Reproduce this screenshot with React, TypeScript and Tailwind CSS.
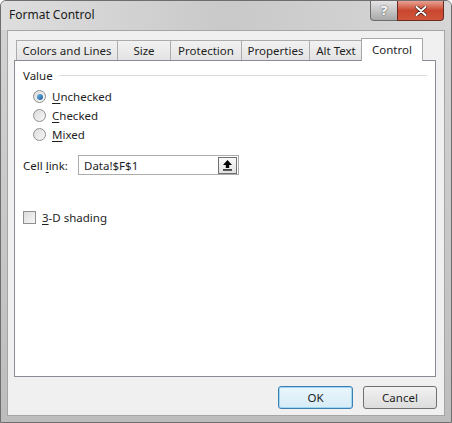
const font = { fontFamily: '"Noto Sans", "Open Sans", Arial, sans-serif' };

function Tab({ label, w, active }: { label: string; w: string; active?: boolean }) {
  if (active) {
    return (
      <div
        className={`${w} -mb-px -ml-[2px] flex h-[23px] items-start justify-center border border-b-0 border-[#a7a7a7] bg-white pt-[2px] text-[11.5px] text-[#1e1e1e] relative z-10`}
      >
        {label}
      </div>
    );
  }
  return (
    <div
      className={`${w} -ml-px flex h-[20px] items-center justify-center border border-b-0 border-[#acacac] bg-gradient-to-b from-[#f2f2f2] to-[#e3e3e3] text-[11.5px] text-[#1e1e1e]`}
    >
      {label}
    </div>
  );
}

function Radio({ label, u, checked }: { label: string; u: string; checked?: boolean }) {
  return (
    <div className="flex h-[19px] items-center gap-[6px]">
      <span className="flex h-[13px] w-[13px] items-center justify-center rounded-full border border-[#8e8f8f] bg-gradient-to-br from-[#dcdcdc] to-[#f7f7f7]">
        {checked && (
          <span className="h-[6px] w-[6px] rounded-full bg-gradient-to-br from-[#6fb5e6] to-[#1d5f9a]" />
        )}
      </span>
      <span className="text-[11.5px] text-[#1e1e1e]">
        <span className="underline underline-offset-2">{u}</span>
        {label.slice(u.length)}
      </span>
    </div>
  );
}

export default function App() {
  return (
    <div
      className="h-[423px] w-[452px] overflow-hidden rounded-t-[6px] border border-[#6e6e6e] bg-gradient-to-b from-[#d4d4d4] to-[#bdbdbd]"
      style={font}
    >
      <div className="flex h-[29px] items-start bg-gradient-to-r from-[#dedede] via-[#c9c9c9] to-[#d6d6d6]">
        <div className="pl-[8px] pt-[5px] text-[12px] text-[#1a1a1a]">Format Control</div>
        <div className="ml-auto mr-[7px] flex">
          <div className="flex h-[20px] w-[28px] items-center justify-center rounded-bl-[4px] border border-t-0 border-[#6d6d6d] bg-gradient-to-b from-[#e4e4e4] to-[#a9a9a9] text-[13px] font-bold text-white [text-shadow:0_0_2px_#444]">
            ?
          </div>
          <div className="-ml-px flex h-[20px] w-[47px] items-center justify-center rounded-br-[4px] border border-t-0 border-[#6b2a20] bg-gradient-to-b from-[#e8a193] via-[#c9462e] to-[#d1553b]">
            <svg width="12" height="10" viewBox="0 0 12 10">
              <path d="M1.5 1 L10.5 9 M10.5 1 L1.5 9" stroke="#3a1a14" strokeWidth="3.4" strokeLinecap="round" />
              <path d="M1.5 1 L10.5 9 M10.5 1 L1.5 9" stroke="#fff" strokeWidth="2" strokeLinecap="round" />
            </svg>
          </div>
        </div>
      </div>

      <div className="mx-[6px] flex h-[386px] flex-col border border-[#a5a5a5] bg-[#f0f0f0] px-[6px] pt-[8px]">
        <div className="flex h-[21px] items-end pl-[3px]">
          <Tab label="Colors and Lines" w="w-[102px]" />
          <Tab label="Size" w="w-[54px]" />
          <Tab label="Protection" w="w-[72px]" />
          <Tab label="Properties" w="w-[69px]" />
          <Tab label="Alt Text" w="w-[54px]" />
          <Tab label="Control" w="w-[62px]" active />
        </div>
        <div className="flex h-[317px] w-[422px] flex-col border border-[#898c95] bg-white px-[8px] pt-[6px] text-[11.5px] text-[#1e1e1e]">
          <div className="flex items-center gap-[6px]">
            <span>Value</span>
            <span className="h-px flex-1 bg-[#dcdcdc]" />
          </div>
          <div className="mt-[3px] flex flex-col pl-[10px]">
            <Radio label="Unchecked" u="U" checked />
            <Radio label="Checked" u="C" />
            <Radio label="Mixed" u="M" />
          </div>
          <div className="mt-[11px] flex items-center">
            <span className="w-[55px]">
              Cell <span className="underline underline-offset-2">l</span>ink:
            </span>
            <div className="flex h-[20px] w-[161px] items-center border border-[#acacac] pl-[5px]">
              <span className="flex-1">Data!$F$1</span>
              <div className="mr-px flex h-[17px] w-[19px] items-center justify-center border border-[#707070] bg-gradient-to-b from-[#fafafa] to-[#e2e2e2]">
                <svg width="11" height="12" viewBox="0 0 11 12">
                  <path d="M5.5 1 L10 6 H7.2 V9 H3.8 V6 H1 Z" fill="#000" />
                  <rect x="1" y="10.3" width="9" height="1.3" fill="#000" />
                </svg>
              </div>
            </div>
          </div>
          <div className="mt-[34px] flex items-center gap-[6px]">
            <span className="h-[13px] w-[13px] border border-[#8e8f8f] bg-gradient-to-br from-[#dcdcdc] to-[#f7f7f7]" />
            <span>
              <span className="underline underline-offset-2">3</span>-D shading
            </span>
          </div>
        </div>
        <div className="mt-[9px] flex justify-end gap-[10px] pr-[1px]">
          <div className="flex h-[23px] w-[75px] items-center justify-center rounded-[3px] border border-[#3c7fb1] bg-gradient-to-b from-[#eaf6fd] to-[#d6ecf7] text-[11.5px] text-[#1e1e1e] shadow-[inset_0_0_0_1px_#9fd6f2]">
            OK
          </div>
          <div className="flex h-[23px] w-[74px] items-center justify-center rounded-[3px] border border-[#707070] bg-gradient-to-b from-[#f2f2f2] to-[#dcdcdc] text-[11.5px] text-[#1e1e1e]">
            Cancel
          </div>
        </div>
      </div>
    </div>
  );
}
